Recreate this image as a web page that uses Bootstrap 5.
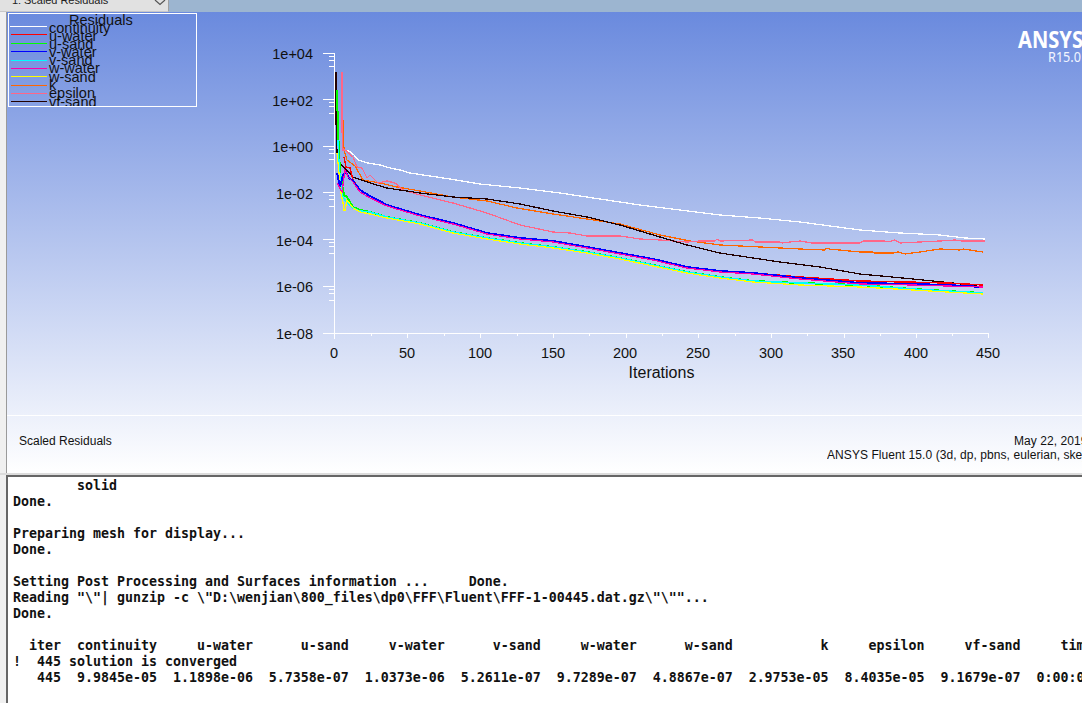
<!DOCTYPE html>
<html lang="en">
<head>
<meta charset="utf-8">
<title>Scaled Residuals</title>
<link href="https://cdn.jsdelivr.net/npm/bootstrap@5.3.0/dist/css/bootstrap.min.css" rel="stylesheet">
<style>
html,body{height:703px;overflow:hidden;background:#f0f0f0;}
body{font-family:"Liberation Sans",Arial,sans-serif;color:#111;}
.shell{width:1082px;height:703px;}
.top-strip{height:12px;background:#9cb5d0;flex:none;}
.view-tab{width:169px;height:12px;background:#e1e1e1;border-right:1px solid #a0a0a0;border-bottom:1px solid #c8c8c8;overflow:hidden;position:relative;}
.view-tab span{display:block;font-size:11px;line-height:12px;margin:-6px 0 0 12px;color:#222;white-space:nowrap;letter-spacing:-.05px;}
.view-tab svg{position:absolute;left:154px;top:0;}
.stage-row{height:461px;flex:none;}
.gutter{width:7px;background:#f0f0f0;border-right:1px solid #9a9a9a;flex:none;}
.stage{flex:1 1 auto;min-width:0;background:linear-gradient(180deg,#6a8ade 0%,#fff 100%);display:flex;flex-direction:column;overflow:hidden;}
.plot{display:block;width:1075px;height:403px;flex:none;}
.plot text{font-family:"Liberation Sans",Arial,sans-serif;fill:#111;}
.plot .lg{font-size:14.5px;}
.plot .ax{font-size:14.5px;}
.plot .axt{font-size:16px;}
.plot .brand{font-family:"Noto Sans",sans-serif;font-weight:700;font-size:22.4px;fill:#fff;}
.plot .rel{font-family:"Noto Sans",sans-serif;font-size:14px;fill:#f2f5ff;}
.plot polyline,.plot path{fill:none;}
.info-band{flex:1 1 auto;border-top:1px solid #fff;font-size:12px;line-height:14px;white-space:nowrap;padding:18px 0 0 12px;}
.info-right{margin-left:auto;width:255px;overflow:hidden;letter-spacing:.07px;}
.info-date{padding-left:187px;}
.sep{height:2px;background:#dcdcdc;flex:none;}
.console-row{flex:1 1 auto;min-height:0;}
.console-gutter{width:6px;background:#f0f0f0;flex:none;}
.console-box{flex:1 1 auto;min-width:0;background:#fff;border-left:2px solid #666;border-top:2px solid #666;overflow:hidden;padding:1px 0 0 5px;}
.console-text{font-family:"DejaVu Sans Mono","Liberation Mono",monospace;font-weight:700;font-size:13.29px;line-height:16px;margin:0;overflow:visible;color:#111;white-space:pre;}
</style>
</head>
<body>
<div class="shell d-flex flex-column">
  <div class="top-strip d-flex">
    <div class="view-tab"><span>1: Scaled Residuals</span>
      <svg width="12" height="6" viewBox="0 0 12 6"><path d="M1 0 L6 4.5 L11 0" stroke="#555" stroke-width="1.2" fill="none"/></svg>
    </div>
  </div>
  <div class="stage-row d-flex">
    <div class="gutter"></div>
    <div class="stage">
      <svg class="plot" viewBox="7 12 1075 403" xmlns="http://www.w3.org/2000/svg">
        <defs><clipPath id="lgclip"><rect x="9" y="14" width="187" height="92"/></clipPath></defs>

        <!-- legend -->
        <rect x="8.5" y="13.5" width="188" height="93" fill="none" stroke="#fff"/>
        <g clip-path="url(#lgclip)">
          <text class="lg" x="69" y="25">Residuals</text>
          <text class="lg" x="49" y="33">continuity</text>
          <text class="lg" x="49" y="41">u-water</text>
          <text class="lg" x="49" y="49">u-sand</text>
          <text class="lg" x="49" y="57">v-water</text>
          <text class="lg" x="49" y="65">v-sand</text>
          <text class="lg" x="49" y="73">w-water</text>
          <text class="lg" x="49" y="82">w-sand</text>
          <text class="lg" x="49" y="90">k</text>
          <text class="lg" x="49" y="98">epsilon</text>
          <text class="lg" x="49" y="107">vf-sand</text>
        </g>
        <g shape-rendering="crispEdges" stroke-width="1">
          <path d="M10 26H47" stroke="#fff"/>
          <path d="M11 34H47" stroke="#f00"/>
          <path d="M11 43H47" stroke="#0f0"/>
          <path d="M11 51H47" stroke="#00f"/>
          <path d="M11 60H47" stroke="#0ff"/>
          <path d="M11 68H47" stroke="#f0a"/>
          <path d="M11 76H47" stroke="#ff0"/>
          <path d="M11 85H47" stroke="#f60"/>
          <path d="M11 93H47" stroke="#f68"/>
          <path d="M11 101H47" stroke="#200"/>
        </g>

        <!-- axes -->
        <g stroke="#fff" stroke-width="1" shape-rendering="crispEdges">
          <path d="M334.5 53V339M323 333.5H989"/>
          <path d="M323 53.5H334M329 56.5H334M329 60.5H334M329 66.5H334"/>
          <path d="M323 99.5H334M329 102.5H334M329 106.5H334M329 113.5H334"/>
          <path d="M323 146.5H334M329 149.5H334M329 153.5H334M329 159.5H334"/>
          <path d="M323 192.5H334M329 195.5H334M329 199.5H334M329 206.5H334"/>
          <path d="M323 239.5H334M329 242.5H334M329 246.5H334M329 253.5H334"/>
          <path d="M323 286.5H334M329 289.5H334M329 293.5H334M329 300.5H334"/>
          <path d="M407.5 333V338M480.5 333V338M553.5 333V338M626.5 333V338M698.5 333V338M771.5 333V338M844.5 333V338M916.5 333V338M988.5 333V338"/>
          <path d="M371.5 333V336M444.5 333V336M517.5 333V336M589.5 333V336M662.5 333V336M735.5 333V336M807.5 333V336M880.5 333V336M952.5 333V336"/>
        </g>
        <g text-anchor="end">
          <text class="ax" x="313" y="59">1e+04</text>
          <text class="ax" x="313" y="106">1e+02</text>
          <text class="ax" x="313" y="152">1e+00</text>
          <text class="ax" x="313" y="199">1e-02</text>
          <text class="ax" x="313" y="246">1e-04</text>
          <text class="ax" x="313" y="292">1e-06</text>
          <text class="ax" x="313" y="339">1e-08</text>
        </g>
        <g text-anchor="middle">
          <text class="ax" x="334" y="358">0</text>
          <text class="ax" x="407" y="358">50</text>
          <text class="ax" x="480" y="358">100</text>
          <text class="ax" x="553" y="358">150</text>
          <text class="ax" x="625" y="358">200</text>
          <text class="ax" x="698" y="358">250</text>
          <text class="ax" x="771" y="358">300</text>
          <text class="ax" x="843" y="358">350</text>
          <text class="ax" x="916" y="358">400</text>
          <text class="ax" x="988" y="358">450</text>
          <text class="axt" x="661.5" y="378">Iterations</text>
        </g>

        <!-- curves -->
        <g stroke-width="1.25" stroke-linejoin="miter" shape-rendering="crispEdges">
          <polyline stroke="#fff" points="343,150 349,151 354,155 358,160 368,163 380,165 390,168 400,170 410,173 430,176 450,179 480,184 520,188 560,193 600,199 640,205 680,210 720,215 760,218 800,222 830,226 860,230 900,233 940,235 965,238 985,239"/>
          <polyline stroke="#f60" points="343,120 344,150 347,160 355,166 363,180 380,183 397,187 420,191 453,197 487,201 517,208 553,214 587,219 620,224 660,235 690,241 720,245 760,247 800,249 825,250 826,248 829,249 860,252 873,252 874,253 893,253 898,252 905,254 920,252 940,249 960,250 963,249 983,252"/>
          <polyline stroke="#f68" points="342,72 342,130 343,150 345,150 353,157 357,167 362,168 367,178 370,175 378,183 387,181 395,183 403,190 420,195 453,203 487,213 520,225 553,232 570,233 587,236 620,236 640,239 660,240 687,242 700,241 715,241 717,239 720,241 753,240 755,242 780,242 782,243 790,242 800,241 812,243 841,243 860,243 863,241 872,241 885,241 888,242 895,240 900,243 940,241 955,240 962,241 985,241"/>
          <polyline stroke="#200" points="336,72 336,120 337,153 340,163 353,177 370,183 387,188 420,193 453,197 487,199 520,204 553,211 587,217 620,225 660,237 687,245 720,253 753,258 780,262 820,267 860,274 913,279 953,283 983,287"/>

          <polyline stroke="#0f0" stroke-width="2" points="337,90 338,130 339,150 340,173 344,195 347,197 353,207 360,210 370,212 387,217 420,223 453,232 487,238 520,243 553,247 587,252 620,258 653,265 687,272 720,277 753,281 800,283 860,285 913,289 947,291 983,293"/>
          <polyline stroke="#0ff" stroke-width="1.5" points="338,140 339,165 342,195 345,200 353,208 360,211 370,212 387,217 420,223 453,232 487,238 520,243 553,247 587,252 620,258 653,265 687,272 720,277 753,281 800,283 860,285 913,289 947,291 983,293"/>
          <polyline stroke="#ff0" points="337,153 341,193 343,203 344,210 345,210 347,200 353,208 360,212 370,214 387,218 420,224 453,233 487,239 520,244 553,248 587,253 620,259 653,266 687,273 720,278 753,282 800,285 860,287 913,290 947,292 983,294"/>

          <polyline stroke="#f00" stroke-width="1.5" points="344,157 346,167 350,168 353,180 360,190 370,196 387,205 420,215 453,223 487,233 520,238 553,241 587,247 620,253 653,259 687,267 720,271 753,273 800,277 860,281 905,282 947,283 983,285"/>
          <polyline stroke="#00f" stroke-width="2" points="337,173 340,187 343,175 346,172 349,178 353,181 360,190 370,196 387,205 420,215 453,223 487,233 520,238 553,241 587,247 620,253 653,259 687,267 720,271 753,273 800,278 860,283 913,284 947,285 983,287"/>
          <polyline stroke="#f0a" points="337,183 342,192 345,170 348,177 353,182 360,192 370,198 387,206 420,216 453,224 487,234 520,239 553,242 587,248 620,254 653,260 687,268 720,272 753,274 800,279 860,284 913,285 947,286 983,287"/>
        </g>

        <!-- logo -->
        <text class="brand" x="1018" y="48" textLength="65" lengthAdjust="spacingAndGlyphs">ANSYS</text>
        <text class="rel" x="1048" y="62" textLength="33" lengthAdjust="spacingAndGlyphs">R15.0</text>
      </svg>
      <div class="info-band d-flex">
        <div>Scaled Residuals</div>
        <div class="info-right">
          <div class="info-date">May 22, 2019</div>
          <div>ANSYS Fluent 15.0 (3d, dp, pbns, eulerian, ske)</div>
        </div>
      </div>
    </div>
  </div>
  <div class="sep"></div>
  <div class="console-row d-flex">
    <div class="console-gutter"></div>
    <div class="console-box"><pre class="console-text">        solid
Done.

Preparing mesh for display...
Done.

Setting Post Processing and Surfaces information ...     Done.
Reading "\"| gunzip -c \"D:\wenjian\800_files\dp0\FFF\Fluent\FFF-1-00445.dat.gz\"\""...
Done.

  iter  continuity     u-water      u-sand     v-water      v-sand     w-water      w-sand           k     epsilon     vf-sand     time/iter
!  445 solution is converged
   445  9.9845e-05  1.1898e-06  5.7358e-07  1.0373e-06  5.2611e-07  9.7289e-07  4.8867e-07  2.9753e-05  8.4035e-05  9.1679e-07  0:00:00</pre></div>
  </div>
</div>
<script src="https://cdn.jsdelivr.net/npm/bootstrap@5.3.0/dist/js/bootstrap.bundle.min.js"></script>
</body>
</html>
